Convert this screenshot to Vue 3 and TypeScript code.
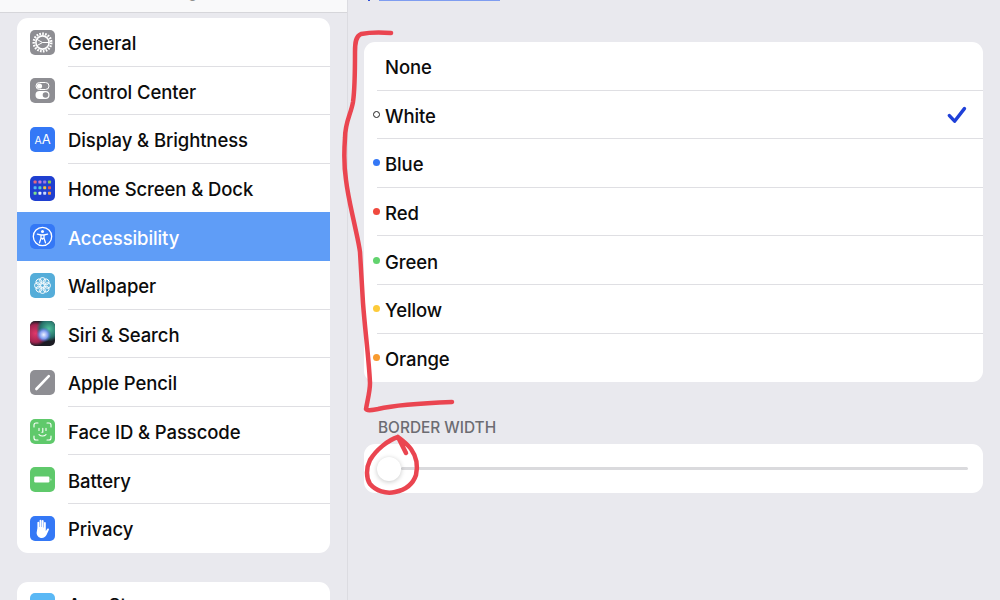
<template>
  <div class="screen">
    <aside class="sidebar">
      <header class="sidebar-head"><span class="sidebar-title">Settings</span></header>
      <ul class="group group--main">
        <li v-for="item in settings" :key="item.label" class="row" :class="{ 'row--active': item.label === 'Accessibility' }">
          <span class="tile" :style="{ background: item.tile }">
            <svg v-if="item.icon === 'gear'" viewBox="0 0 25 25" class="glyph">
              <circle cx="12.5" cy="12.5" r="6.6" fill="none" stroke="#fff" stroke-width="1.6" />
              <circle cx="12.5" cy="12.5" r="8.8" fill="none" stroke="#fff" stroke-width="2.4" stroke-dasharray="1.7 1.22" />
              <path d="M12.5 12.5L6.6 9.2M12.5 12.5L6.6 15.8M12.5 12.5h6.6" stroke="#fff" stroke-width="1" fill="none" />
            </svg>
            <svg v-else-if="item.icon === 'toggles'" viewBox="0 0 25 25" class="glyph">
              <rect x="6" y="4.5" width="13" height="7" rx="3.5" fill="none" stroke="#fff" stroke-width="1" />
              <circle cx="9.5" cy="8" r="2.6" fill="#fff" />
              <rect x="5.5" y="13" width="14" height="8" rx="4" fill="#fff" />
              <circle cx="15.5" cy="17" r="2.8" fill="#8e8e93" />
            </svg>
            <span v-else-if="item.icon === 'aa'" class="tile-aa"><small>A</small>A</span>
            <svg v-else-if="item.icon === 'grid'" viewBox="0 0 25 25" class="glyph">
              <rect
                v-for="cell in homeCells"
                :key="cell.key"
                :x="cell.x"
                :y="cell.y"
                width="3"
                height="3"
                rx="0.7"
                :fill="cell.color"
              />
            </svg>
            <svg v-else-if="item.icon === 'person'" viewBox="0 0 25 25" class="glyph">
              <circle cx="12.5" cy="12.5" r="9.2" fill="none" stroke="#fff" stroke-width="1.3" />
              <circle cx="12.5" cy="7.6" r="1.5" fill="#fff" />
              <path d="M7.4 10.2l3.6.8v3.2l-1.5 4.6M17.6 10.2l-3.6.8v3.2l1.5 4.6M11 11h3M11 14.4h3M12.5 14.6v.6" fill="none" stroke="#fff" stroke-width="1.3" stroke-linecap="round" stroke-linejoin="round" />
            </svg>
            <svg v-else-if="item.icon === 'flower'" viewBox="0 0 25 25" class="glyph">
              <circle
                v-for="angle in petals"
                :key="angle"
                cx="12.5"
                cy="7.4"
                r="2.9"
                fill="rgba(255,255,255,.12)"
                stroke="#fff"
                stroke-width="0.9"
                :transform="`rotate(${angle} 12.5 12.5)`"
              />
              <circle cx="12.5" cy="12.5" r="1.8" fill="none" stroke="#fff" stroke-width="0.9" />
            </svg>
            <svg v-else-if="item.icon === 'siri'" viewBox="0 0 25 25" class="glyph">
              <defs>
                <radialGradient id="siri-a" cx="0.22" cy="0.5" r="0.5">
                  <stop offset="0" stop-color="#e0386a" />
                  <stop offset="0.7" stop-color="#a02550" />
                  <stop offset="1" stop-color="#a02550" stop-opacity="0" />
                </radialGradient>
                <radialGradient id="siri-b" cx="0.75" cy="0.32" r="0.5">
                  <stop offset="0" stop-color="#4fc29c" />
                  <stop offset="0.7" stop-color="#256e68" />
                  <stop offset="1" stop-color="#256e68" stop-opacity="0" />
                </radialGradient>
                <radialGradient id="siri-c" cx="0.55" cy="0.55" r="0.3">
                  <stop offset="0" stop-color="#eef3ff" />
                  <stop offset="0.55" stop-color="#7f9cf0" />
                  <stop offset="1" stop-color="#4a5fd0" stop-opacity="0" />
                </radialGradient>
              </defs>
              <rect width="25" height="25" fill="url(#siri-a)" />
              <rect width="25" height="25" fill="url(#siri-b)" />
              <rect width="25" height="25" fill="url(#siri-c)" />
            </svg>
            <svg v-else-if="item.icon === 'pencil'" viewBox="0 0 25 25" class="glyph">
              <path d="M6.4 19L18.8 6.2" fill="none" stroke="#fff" stroke-width="2.6" stroke-linecap="round" />
            </svg>
            <svg v-else-if="item.icon === 'face'" viewBox="0 0 25 25" class="glyph">
              <path d="M4 8V6a2 2 0 0 1 2-2h2M17 4h2a2 2 0 0 1 2 2v2M21 17v2a2 2 0 0 1-2 2h-2M8 21H6a2 2 0 0 1-2-2v-2" fill="none" stroke="#fff" stroke-width="1.1" stroke-linecap="round" />
              <path d="M9 9.4v2M16 9.4v2M12.8 9.4v3.8h-.9M9 15.6c1.9 1.8 5.1 1.8 7 0" fill="none" stroke="#fff" stroke-width="1.1" stroke-linecap="round" stroke-linejoin="round" />
            </svg>
            <svg v-else-if="item.icon === 'battery'" viewBox="0 0 25 25" class="glyph">
              <rect x="4.2" y="9.6" width="15.2" height="5.8" rx="1.2" fill="#fff" />
              <rect x="20.4" y="11.4" width="1" height="2.2" rx="0.5" fill="#fff" opacity=".7" />
            </svg>
            <svg v-else-if="item.icon === 'hand'" viewBox="0 0 25 25" class="glyph">
              <path d="M7.4 12V6.6a.9.9 0 0 1 1.8 0V11h.4V4.6a.9.9 0 0 1 1.8 0V11h.4V5a.9.9 0 0 1 1.8 0v6.4h.4V7a.9.9 0 0 1 1.8 0v8.2l1.4-2.4a1 1 0 0 1 1.7 1l-2.3 5c-.9 2-2.6 3.2-4.8 3.2-3 0-5-2.2-5.2-5z" fill="#fff" />
            </svg>
          </span>
          <span class="row-label">{{ item.label }}</span>
        </li>
      </ul>
      <ul class="group group--next">
        <li class="row">
          <span class="tile" style="background: #5ab8f5"></span>
          <span class="row-label row-label--clipped">App Store</span>
        </li>
      </ul>
    </aside>

    <main class="detail">
      <div class="back-link"><i class="back-dot"></i><i class="back-line"></i></div>
      <ul class="card">
        <li v-for="opt in colors" :key="opt.name" class="option">
          <i v-if="opt.dot" class="dot" :class="{ 'dot--ring': opt.name === 'White' }" :style="{ background: opt.dot }"></i>
          <span class="option-label">{{ opt.name }}</span>
          <svg v-if="opt.name === 'White'" class="check" viewBox="0 0 20 18">
            <path d="M2.4 9.6l5.2 5.6L17.4 2.6" fill="none" stroke="#1f40d8" stroke-width="3.4" stroke-linecap="round" stroke-linejoin="round" />
          </svg>
        </li>
      </ul>
      <h2 class="section-title">BORDER WIDTH</h2>
      <div class="slider-card">
        <span class="thumb"></span>
        <span class="track"></span>
      </div>
    </main>

    <!-- pen marks drawn over the screenshot -->
    <svg class="scribble" viewBox="0 0 1000 600">
      <path d="M391 33C378 32 366 33 361 34C356 36 355 42 355 52C355 70 355 88 353 102C351 114 345 122 345 138C344 152 344 167 346 180C348 196 351 208 354 222C357 236 359 244 360 252C361 270 362 286 363 303C365 330 369 360 370 383C370 392 367 402 366 409C367 411 372 410 378 409C395 405 425 403 452 402" />
      <path d="M398 437C388 440 376 450 370 460C366 468 366 478 370 484C376 491 386 494 395 492C405 490 413 484 416 475C418 466 416 456 411 449C408 445 402 440 398 437L406 453" />
    </svg>
  </div>
</template>

<script setup lang="ts">
type Setting = { label: string; tile: string; icon: string };

const settings: Setting[] = [
  { label: "General", tile: "#8e8e93", icon: "gear" },
  { label: "Control Center", tile: "#8e8e93", icon: "toggles" },
  { label: "Display & Brightness", tile: "#3478f6", icon: "aa" },
  { label: "Home Screen & Dock", tile: "#1f3fd0", icon: "grid" },
  { label: "Accessibility", tile: "#3478f6", icon: "person" },
  { label: "Wallpaper", tile: "#55add9", icon: "flower" },
  { label: "Siri & Search", tile: "#1c1c24", icon: "siri" },
  { label: "Apple Pencil", tile: "#8e8e93", icon: "pencil" },
  { label: "Face ID & Passcode", tile: "#5fc96b", icon: "face" },
  { label: "Battery", tile: "#5fc96b", icon: "battery" },
  { label: "Privacy", tile: "#3478f6", icon: "hand" },
];

const colors = [
  { name: "None", dot: "" },
  { name: "White", dot: "#fff" },
  { name: "Blue", dot: "#3478f6" },
  { name: "Red", dot: "#f0493e" },
  { name: "Green", dot: "#62d36e" },
  { name: "Yellow", dot: "#fdcb3a" },
  { name: "Orange", dot: "#f89b30" },
];

const petals = [0, 45, 90, 135, 180, 225, 270, 315];

const gridColors = [
  ["#e8697a", "#c77ad8", "#9a7be0", "#8bc94e"],
  ["#58b6f0", "#4fd0c8", "#f2c23c", "#e8584c"],
  ["#7de08a", "#e8eefc", "#c9d8ff", "#f09a4a"],
];

const homeCells = gridColors.flatMap((line, r) =>
  line.map((color, c) => ({
    key: `${r}-${c}`,
    x: 3.6 + c * 4.8,
    y: 4.6 + r * 5.6,
    color,
  })),
);
</script>

<style scoped>
.screen {
  position: relative;
  display: grid;
  grid-template-columns: 348px 1fr;
  width: 1000px;
  height: 600px;
  overflow: hidden;
  background: #e9e9ee;
  font-family: Inter, "Liberation Sans", sans-serif;
  color: #0c0c0c;
}
ul {
  list-style: none;
  margin: 0;
  padding: 0;
}
.sidebar {
  display: flex;
  flex-direction: column;
  height: 600px;
  overflow: hidden;
  border-right: 1px solid #dcdce1;
}
.sidebar-head {
  flex: none;
  display: flex;
  flex-direction: column;
  justify-content: flex-end;
  align-items: center;
  height: 13px;
  overflow: hidden;
  background: #f9f9fa;
  border-bottom: 1px solid #d6d6da;
  padding-bottom: 11px;
  box-sizing: border-box;
}
.sidebar-title {
  flex: none;
  font-size: 17px;
  font-weight: 600;
  line-height: 20px;
  color: #777;
}
.group {
  flex: none;
  margin: 0 17px;
  background: #fff;
  border-radius: 11px;
  overflow: hidden;
}
.group--main {
  margin-top: 5px;
}
.group--next {
  margin-top: 29px;
}
.row {
  position: relative;
  display: flex;
  align-items: center;
  gap: 13px;
  height: 48.6px;
  padding-left: 13px;
  box-sizing: border-box;
}
.row + .row::before {
  content: "";
  position: absolute;
  top: -1px;
  left: 51px;
  right: 0;
  height: 1px;
  background: #dfdfe3;
}
.row--active {
  background: #5f9df7;
  color: #fff;
}
.row--active::before,
.row--active + .row::before {
  display: none;
}
.row-label {
  margin-top: 2px;
  font-size: 18.5px;
  font-weight: 500;
  letter-spacing: -0.1px;
  white-space: nowrap;
}
.row-label--clipped {
  margin-top: -2px;
}
.tile {
  flex: none;
  display: flex;
  align-items: center;
  justify-content: center;
  width: 25px;
  height: 25px;
  border-radius: 5px;
  overflow: hidden;
}
.glyph {
  display: block;
  width: 25px;
  height: 25px;
}
.tile-aa {
  color: #fff;
  font-size: 13px;
  line-height: 1;
  font-weight: 400;
}
.tile-aa small {
  font-size: 10.5px;
}
.detail {
  display: flex;
  flex-direction: column;
  padding: 0 17px 0 16px;
}
.back-link {
  flex: none;
  display: flex;
  gap: 9px;
  align-items: flex-start;
  height: 42px;
  padding-left: 4px;
}
.back-dot {
  width: 2px;
  height: 1px;
  background: #2f4fd8;
}
.back-line {
  width: 121px;
  height: 1px;
  background: #7f9df0;
}
.card {
  background: #fff;
  border-radius: 11px;
  overflow: hidden;
}
.option {
  position: relative;
  display: flex;
  align-items: center;
  height: 48.6px;
  padding-left: 21px;
  box-sizing: border-box;
}
.option + .option::before {
  content: "";
  position: absolute;
  top: -1px;
  left: 13px;
  right: 0;
  height: 1px;
  background: #dfdfe3;
}
.option-label {
  margin-top: 2px;
  font-size: 18.5px;
  font-weight: 500;
  letter-spacing: -0.1px;
}
.dot {
  position: absolute;
  left: 8.5px;
  top: 50%;
  width: 7px;
  height: 7px;
  margin-top: -4px;
  border-radius: 50%;
  box-sizing: border-box;
}
.dot--ring {
  border: 1px solid #222;
}
.check {
  position: absolute;
  right: 16px;
  top: 15px;
  width: 20px;
  height: 18px;
}
.section-title {
  margin: 37px 0 7px 14px;
  font-size: 15.4px;
  line-height: 18px;
  font-weight: 500;
  color: #6c6c72;
}
.slider-card {
  display: flex;
  align-items: center;
  height: 49px;
  padding: 0 15px 0 13px;
  background: #fff;
  border-radius: 11px;
  box-sizing: border-box;
}
.thumb {
  flex: none;
  position: relative;
  z-index: 1;
  width: 24px;
  height: 24px;
  border-radius: 50%;
  background: #fff;
  box-shadow: 0 1px 5px rgba(0, 0, 0, 0.22);
}
.track {
  flex: 1;
  height: 3px;
  border-radius: 2px;
  background: #dadadd;
}
.scribble {
  position: absolute;
  inset: 0;
  width: 1000px;
  height: 600px;
  pointer-events: none;
  fill: none;
  stroke: #ea4550;
  stroke-width: 4.5;
  stroke-linecap: round;
  stroke-linejoin: round;
}
</style>
